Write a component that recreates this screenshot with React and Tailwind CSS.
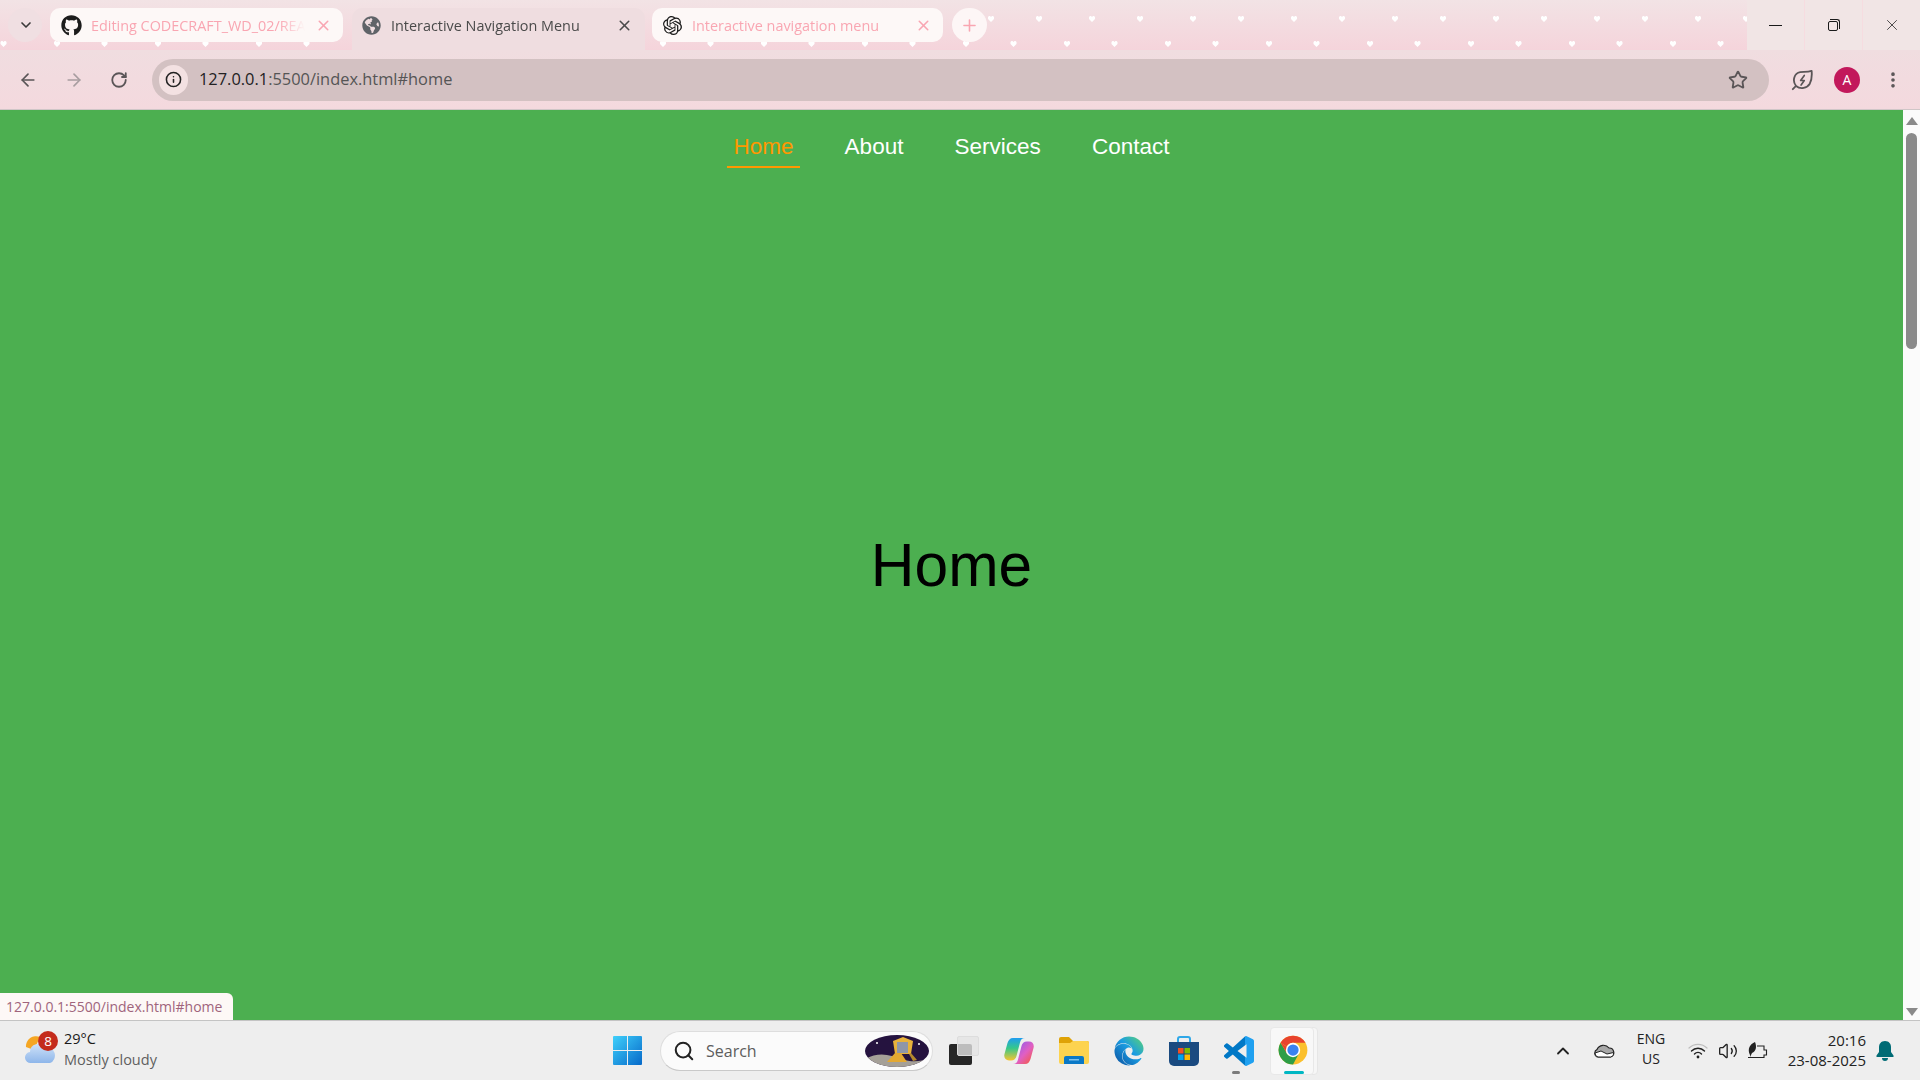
import { ArrowLeft, ArrowRight, ChevronDown, ChevronUp, EllipsisVertical, Info, Plus, RotateCw, Search, Star, Volume2, X } from 'lucide-react';
import { FaEdge, FaGithub, FaGlobeAmericas } from 'react-icons/fa';
import { SiOpenai } from 'react-icons/si';

const heartRow = (first, second, count) => {
  const out = [];
  for (let i = 0; i < count; i++) {
    out.push(first + i * 101);
    out.push(second + i * 101);
  }
  return out;
};

const upperHearts = heartRow(-19, 29, 18);
const lowerHearts = heartRow(3.5, 57, 18);

function Hearts() {
  const heart = 'M0 1 L1 0 L2 0 L3 1 L4 0 L5 0 L6 1 L6 3 L3 6 L0 3 Z';
  return (
    <svg className="absolute left-0 top-0 w-[1920px] h-[50px]" viewBox="0 0 1920 50">
      {upperHearts.map((x) => (
        <path key={'u' + x} d={heart} fill="#fff" transform={`translate(${x - 3} 16)`} />
      ))}
      {lowerHearts.map((x) => (
        <path key={'l' + x} d={heart} fill="#fff" transform={`translate(${x - 3} 41)`} />
      ))}
    </svg>
  );
}

function LeafBolt({ className }) {
  return (
    <svg className={className} viewBox="0 0 24 24" fill="none" stroke="currentColor" strokeWidth="2" strokeLinejoin="round" strokeLinecap="round">
      <path d="M2 22 L5.5 18.5 C1 13 3.5 4.5 10 3.5 C14 3 18 3.5 22.5 2 C23 7 22.5 12 20.5 16 C17.5 21 10.5 22.5 5.5 18.5" />
      <path d="M14.5 7 L10.5 12.5 H14.5 L11 17.5" strokeWidth="1.8" />
    </svg>
  );
}

function WindowsLogo() {
  return (
    <svg className="w-[29px] h-[29px]" viewBox="0 0 29 29">
      <defs>
        <linearGradient id="win" x1="0" y1="0" x2="1" y2="1">
          <stop offset="0" stopColor="#3fd0fb" />
          <stop offset="1" stopColor="#0669c9" />
        </linearGradient>
      </defs>
      <path d="M1 0 H14 V14 H0 V1 A1 1 0 0 1 1 0 Z M15 0 H28 A1 1 0 0 1 29 1 V14 H15 Z M0 15 H14 V29 H1 A1 1 0 0 1 0 28 Z M15 15 H29 V28 A1 1 0 0 1 28 29 H15 Z" fill="url(#win)" />
    </svg>
  );
}

function Lander() {
  return (
    <svg className="w-[64px] h-[32px]" viewBox="0 0 64 32">
      <defs>
        <clipPath id="pill">
          <ellipse cx="32" cy="16" rx="32" ry="16" />
        </clipPath>
      </defs>
      <g clipPath="url(#pill)">
        <rect width="64" height="32" fill="#25133f" />
        <path d="M0 24 C14 16 26 20 36 24 C48 28 56 26 64 24 V32 H0 Z" fill="#a5a098" />
        <path d="M28 6 L38 2 L48 6 L46 19 H30 Z" fill="#e8b23c" />
        <rect x="32" y="7" width="11" height="11" fill="#8f96a8" />
        <path d="M30 18 L22 27 H42 L36 18 Z" fill="#e3a832" />
        <path d="M46 18 L52 25 L48 26 L44 19 Z" fill="#b4882c" />
        <circle cx="12" cy="8" r="1" fill="#fff" />
        <circle cx="54" cy="9" r="1" fill="#fff" />
      </g>
    </svg>
  );
}

function TaskView() {
  return (
    <div className="relative w-[30px] h-[29px]">
      <div className="absolute left-0 bottom-0 w-[23px] h-[21px] rounded-[2px] bg-[#262626]" />
      <div className="absolute right-0 top-0 w-[22px] h-[20px] rounded-[2px] bg-[#e4e4e4]/80 border border-[#dddddd]" />
    </div>
  );
}

function Copilot() {
  const blob = 'M9 1 H21 C18 1 16.5 3 16 5.5 L12.5 19 C12 21.5 10 23.5 7 23.5 H5 C1.5 23.5 -0.5 20.5 0.5 17 L3.5 6 C4.5 3 6 1 9 1 Z';
  return (
    <svg className="w-[30px] h-[28px]" viewBox="0 0 30 28">
      <defs>
        <linearGradient id="copA" x1="0" y1="0" x2="0" y2="1">
          <stop offset="0" stopColor="#1f9cf0" />
          <stop offset="0.45" stopColor="#35c88a" />
          <stop offset="1" stopColor="#f7c530" />
        </linearGradient>
        <linearGradient id="copB" x1="1" y1="1" x2="0" y2="0">
          <stop offset="0" stopColor="#7a5cf5" />
          <stop offset="0.55" stopColor="#e05fc4" />
          <stop offset="1" stopColor="#f7592f" />
        </linearGradient>
      </defs>
      <path d={blob} fill="url(#copA)" />
      <path d={blob} fill="url(#copB)" transform="rotate(180 15 14)" />
    </svg>
  );
}

function Explorer() {
  return (
    <svg className="w-[30px] h-[27px]" viewBox="0 0 30 27">
      <path d="M0 2 A2 2 0 0 1 2 0 H10 L14 4 H28 A2 2 0 0 1 30 6 V12 H0 Z" fill="#dfa206" />
      <path d="M0 6 H11 L14 4 H28 A2 2 0 0 1 30 6 V25 A2 2 0 0 1 28 27 H2 A2 2 0 0 1 0 25 Z" fill="#fdd34f" />
      <path d="M5 27 V21 A2 2 0 0 1 7 19 H23 A2 2 0 0 1 25 21 V27 Z" fill="#0a78c6" />
      <rect x="10" y="22" width="10" height="1.5" fill="#7cc0ec" />
    </svg>
  );
}

function Store() {
  return (
    <svg className="w-[30px] h-[30px]" viewBox="0 0 30 30">
      <path d="M9 7 V3 A2 2 0 0 1 11 1 H19 A2 2 0 0 1 21 3 V7" fill="none" stroke="#2fa8e8" strokeWidth="2" />
      <path d="M0 6 H30 V25 A5 5 0 0 1 25 30 H5 A5 5 0 0 1 0 25 Z" fill="#1a4a80" />
      <rect x="9" y="12" width="5.5" height="5.5" fill="#f25022" />
      <rect x="15.5" y="12" width="5.5" height="5.5" fill="#7fba00" />
      <rect x="9" y="18.5" width="5.5" height="5.5" fill="#00a4ef" />
      <rect x="15.5" y="18.5" width="5.5" height="5.5" fill="#ffb900" />
    </svg>
  );
}

function VsCode() {
  return (
    <svg className="w-[30px] h-[30px]" viewBox="0 0 24 24">
      <defs>
        <linearGradient id="vsc" x1="0" y1="0" x2="1" y2="0">
          <stop offset="0.7" stopColor="#0078c6" />
          <stop offset="0.7" stopColor="#1fa0f0" />
        </linearGradient>
      </defs>
      <path
        d="M23.15 2.587L18.21.21a1.494 1.494 0 0 0-1.705.29l-9.46 8.63-4.12-3.128a.999.999 0 0 0-1.276.057L.327 7.261A1 1 0 0 0 .326 8.74L3.899 12 .326 15.26a1 1 0 0 0 .001 1.479L1.65 17.94a.999.999 0 0 0 1.276.057l4.12-3.128 9.46 8.63a1.492 1.492 0 0 0 1.704.29l4.942-2.377A1.5 1.5 0 0 0 24 20.06V3.939a1.5 1.5 0 0 0-.85-1.352zm-5.146 14.861L10.826 12l7.178-5.448v10.896z"
        fill="url(#vsc)"
      />
    </svg>
  );
}

function ChromeLogo() {
  return (
    <svg className="w-[30px] h-[30px]" viewBox="0 0 48 48">
      <circle cx="24" cy="24" r="23" fill="#fbc02d" />
      <path d="M4.08 12.5 A23 23 0 0 0 24 47 L33.53 29.5 L14.47 29.5 Z" fill="#2e9e47" />
      <path d="M24 1 A23 23 0 0 1 43.92 12.5 H24 A11.5 11.5 0 0 0 14.04 18.25 L4.08 12.5 A23 23 0 0 1 24 1 Z" fill="#e8432e" />
      <path d="M4.08 12.5 L14.47 29.5 L19 22 Z" fill="#e8432e" />
      <circle cx="24" cy="24" r="11.5" fill="#fff" />
      <circle cx="24" cy="24" r="9" fill="#3b82f0" />
    </svg>
  );
}

function Weather() {
  return (
    <svg className="w-[31px] h-[34px]" viewBox="0 0 31 34">
      <defs>
        <linearGradient id="cloud" x1="0" y1="0" x2="0" y2="1">
          <stop offset="0" stopColor="#cfe2f8" />
          <stop offset="1" stopColor="#8eb6ea" />
        </linearGradient>
      </defs>
      <path d="M15 5 A10 10 0 0 0 1 15 L9 18 Z" fill="#f5a623" />
      <path d="M6 31 A5.5 5.5 0 0 1 5 20 A8 8 0 0 1 20 16 A7 7.5 0 0 1 25 31 Z" fill="url(#cloud)" />
    </svg>
  );
}

function OneDrive() {
  return (
    <svg className="w-[22px] h-[15px]" viewBox="0 0 22 15">
      <path d="M5 14 A4 4 0 0 1 4 6.5 A7 7 0 0 1 16 5 A4.6 4.6 0 0 1 17.5 14 Z" fill="#a8a8a8" stroke="#222" strokeWidth="1.2" />
      <path d="M2 10 L8 8 L14 11 L20.5 9.5 A4 4 0 0 1 17.5 14 H5 A4 4 0 0 1 2 10 Z" fill="#fff" stroke="#222" strokeWidth="1" />
    </svg>
  );
}

function WifiArcs() {
  return (
    <svg className="w-[20px] h-[18px]" viewBox="0 0 20 18" fill="none" strokeLinecap="round">
      <path d="M1 6 A13 13 0 0 1 19 6" stroke="#bdbdbd" strokeWidth="1.2" />
      <path d="M3.5 9 A9 9 0 0 1 16.5 9" stroke="#222" strokeWidth="1.4" />
      <path d="M6.5 12 A5 5 0 0 1 13.5 12" stroke="#222" strokeWidth="1.4" />
      <circle cx="10" cy="15" r="1.4" fill="#222" />
    </svg>
  );
}

function BatteryLeaf() {
  return (
    <svg className="w-[22px] h-[20px]" viewBox="0 0 22 20">
      <path d="M1 16.5 H17 V14 H19.5 V9 H17 V5 H10" fill="none" stroke="#222" strokeWidth="1.1" />
      <path d="M3 14 C0 8 3 3 8 1 C10 6 9 10 5 12 L3 16" fill="#222" />
    </svg>
  );
}

function Bell() {
  return (
    <svg className="w-[18px] h-[20px]" viewBox="0 0 18 20">
      <path d="M9 0 C5 0 3 3 3 6 V11 L0.5 14.5 V16 H17.5 V14.5 L15 11 V6 C15 3 13 0 9 0 Z" fill="#006b75" />
      <path d="M6 17 H12 A3 3 0 0 1 6 17 Z" fill="#006b75" />
    </svg>
  );
}

function Tab({ icon, title, active, className }) {
  return (
    <div
      className={`flex items-center pl-[11px] pr-[11px] mt-[8px] ${
        active ? 'h-[34px] rounded-[10px] bg-[#fdf8f7] text-[#f9a6b2]' : 'h-[42px] pb-[8px] rounded-t-[10px] bg-[#efdde0] text-[#4a4a4a]'
      } ${className}`}
    >
      <span className="w-[21px] h-[21px] flex items-center justify-center shrink-0 text-[#1c1c1c]">{icon}</span>
      <span className="ml-[9px] flex-1 min-w-0 overflow-hidden whitespace-nowrap text-[14.4px] pt-[2px] [mask-image:linear-gradient(to_right,black_88%,transparent)]">{title}</span>
      <X className="w-[17px] h-[17px] ml-[10px] shrink-0" strokeWidth={2.2} />
    </div>
  );
}

export default function App() {
  return (
    <div className="w-[1920px] h-[1080px] flex flex-col overflow-hidden font-['Open_Sans','Noto_Sans',sans-serif]">
      {/* Tab strip */}
      <div className="relative h-[50px] flex bg-gradient-to-b from-[#f2e3e5] to-[#f5d4db]">
        <Hearts />
        <div className="relative flex flex-1 items-start pl-[8px]">
          <div className="mt-[8px] w-[34px] h-[34px] rounded-full bg-[#f0dfe2] flex items-center justify-center pl-[2px] text-[#3a3a3a]">
            <ChevronDown className="w-[16px] h-[16px]" strokeWidth={2.5} />
          </div>
          <Tab active className="ml-[8px] w-[293px]" icon={<FaGithub className="w-[21px] h-[21px]" />} title="Editing CODECRAFT_WD_02/README.md" />
          <Tab className="ml-[9px] w-[293px] !pl-[9px] !pr-[12px]" icon={<FaGlobeAmericas className="w-[19px] h-[19px] text-[#5f6368]" />} title="Interactive Navigation Menu" />
          <Tab active className="ml-[7px] w-[291px] !pl-[10px]" icon={<SiOpenai className="w-[19px] h-[19px]" />} title="Interactive navigation menu" />
          <div className="mt-[8px] ml-[9px] w-[35px] h-[34px] rounded-full bg-[#fdf6f6] flex items-center justify-center text-[#f9a6b2]">
            <Plus className="w-[19px] h-[19px]" strokeWidth={2} />
          </div>
        </div>
        <div className="relative flex w-[173px] bg-[#f1e5e5] text-[#1a1a1a]">
          <div className="w-[57px] flex items-center justify-center">
            <div className="w-[13px] h-px bg-[#1a1a1a]" />
          </div>
          <div className="w-[58px] flex items-center justify-center border-l border-[#f6dce0]">
            <div className="relative w-[12px] h-[12px]">
              <div className="absolute left-0 bottom-0 w-[10px] h-[10px] rounded-[2px] border border-[#1a1a1a]" />
              <div className="absolute right-0 top-0 w-[10px] h-[10px] rounded-tr-[3px] border-t border-r border-[#1a1a1a]" />
            </div>
          </div>
          <div className="flex-1 flex items-center justify-center border-l border-[#f6dce0]">
            <X className="w-[18px] h-[18px]" strokeWidth={1} />
          </div>
        </div>
      </div>

      {/* Toolbar */}
      <div className="h-[60px] flex items-center pl-[18px] bg-gradient-to-b from-[#f0dde0] to-[#f4d9de] border-b border-[#cfc6c7] text-[#5a5557]">
        <ArrowLeft className="w-[20px] h-[20px]" strokeWidth={2} />
        <ArrowRight className="w-[20px] h-[20px] ml-[26px] text-[#a89da0]" strokeWidth={2} />
        <RotateCw className="w-[18px] h-[18px] ml-[26px]" strokeWidth={2.4} />
        <div className="ml-[24px] w-[1617px] h-[42px] rounded-full bg-[#d3c1c2] flex items-center pl-[7px] pr-[21px]">
          <div className="w-[29px] h-[30px] rounded-full bg-[#f3e1e2] flex items-center justify-center text-[#222]">
            <Info className="w-[17px] h-[17px]" strokeWidth={2.2} />
          </div>
          <span className="ml-[11px] text-[16.4px] text-[#222]">
            127.0.0.1<span className="text-[#555]">:5500/index.html#home</span>
          </span>
          <Star className="ml-auto w-[20px] h-[20px]" strokeWidth={2.2} />
        </div>
        <LeafBolt className="ml-[22px] w-[22px] h-[22px]" />
        <div className="ml-[21px] w-[26px] h-[26px] rounded-full bg-[#c2185b] flex items-center justify-center text-[14px] text-white">A</div>
        <EllipsisVertical className="ml-[23px] w-[20px] h-[20px]" strokeWidth={2.4} />
      </div>

      {/* Page */}
      <div className="flex h-[910px]">
        <main className="relative flex-1 bg-[#4caf50] flex items-center justify-center font-['Liberation_Sans',Arial,sans-serif]">
          <nav className="absolute left-0 right-0 top-[20px] flex justify-center gap-[38.4px] text-[22.5px] leading-[33px] text-white">
            <a className="px-[6.4px] pb-[3px] border-b-2 border-[#ff9800] text-[#ff9800]">Home</a>
            <a className="px-[6.4px] pb-[3px] border-b-2 border-transparent">About</a>
            <a className="px-[6.4px] pb-[3px] border-b-2 border-transparent">Services</a>
            <a className="px-[6.4px] pb-[3px] border-b-2 border-transparent">Contact</a>
          </nav>
          <h1 className="text-[60.5px] text-black">Home</h1>
          <div className="absolute left-0 bottom-0 w-[233px] h-[27px] rounded-tr-[6px] bg-[#fdf8f6] pl-[6px] flex items-center text-[14px] text-[#a0647c] font-['Open_Sans',sans-serif]">
            127.0.0.1:5500/index.html#home
          </div>
        </main>
        <div className="w-[17px] bg-[#fbfbfb] flex flex-col items-center pt-[7px] pb-[4px]">
          <div className="w-0 h-0 border-x-[6px] border-x-transparent border-b-[8px] border-b-[#8a8a8a]" />
          <div className="mt-[8px] w-[11px] h-[216px] rounded-full bg-[#8a8a8a]" />
          <div className="mt-auto w-0 h-0 border-x-[6px] border-x-transparent border-t-[8px] border-t-[#8a8a8a]" />
        </div>
      </div>

      {/* Taskbar */}
      <div className="h-[60px] flex items-center bg-[#eeeeee] border-t border-[#c4c4c4]">
        <div className="w-[613px] pl-[25px] flex items-center">
          <div className="relative -mt-[3px]">
            <Weather />
            <div className="absolute left-[13px] -top-[1px] w-[20px] h-[20px] rounded-full bg-[#c42b1c] flex items-center justify-center text-[13.5px] text-white">8</div>
          </div>
          <div className="ml-[8px] -mt-[3px] text-[14.5px] leading-[21px]">
            <div className="text-[#1a1a1a]">29°C</div>
            <div className="text-[#5f5f5f]">Mostly cloudy</div>
          </div>
        </div>
        <WindowsLogo />
        <div className="ml-[18px] w-[273px] h-[40px] rounded-full bg-[#fbfbfb] border border-[#dedede] border-b-[#c9c9c9] flex items-center pl-[12px] pr-[3px]">
          <Search className="w-[22px] h-[22px] text-[#222]" strokeWidth={2.2} />
          <span className="ml-[11px] text-[16px] text-[#5d5d5d]">Search</span>
          <div className="ml-auto flex">
            <Lander />
          </div>
        </div>
        <div className="ml-[16px]"><TaskView /></div>
        <div className="ml-[25px]"><Copilot /></div>
        <div className="ml-[25px]"><Explorer /></div>
        <div className="ml-[25px] w-[30px] h-[30px]">
          <svg className="w-0 h-0 absolute">
            <defs>
              <linearGradient id="edge" x1="0" y1="1" x2="1" y2="0">
                <stop offset="0" stopColor="#0b4f9e" />
                <stop offset="0.55" stopColor="#1b9de2" />
                <stop offset="1" stopColor="#5ed66f" />
              </linearGradient>
            </defs>
          </svg>
          <FaEdge className="w-[30px] h-[30px] fill-[url(#edge)]" />
        </div>
        <div className="ml-[25px]"><Store /></div>
        <div className="ml-[25px] relative">
          <VsCode />
          <div className="absolute left-[8px] -bottom-[8px] w-[8px] h-[3px] rounded-full bg-[#7b7b7b]" />
        </div>
        <div className="ml-[16px] relative w-[48px] h-[48px]">
          <div className="absolute right-0 top-0 w-[10px] h-[48px] rounded-r-[4px] bg-[#f6f6f6] border border-[#e6e6e6]" />
          <div className="absolute left-0 top-0 w-[44px] h-[48px] rounded-[4px] bg-[#f8f8f8] border border-[#e8e8e8] flex items-center justify-center pl-[2px] pb-[2px]">
            <ChromeLogo />
          </div>
          <div className="absolute left-[14px] bottom-[1px] w-[20px] h-[3px] rounded-full bg-[#00b7c3]" />
        </div>
        <ChevronUp className="ml-[235px] w-[20px] h-[20px] text-[#222]" strokeWidth={2.2} />
        <div className="ml-[20px]"><OneDrive /></div>
        <div className="ml-[20px] -mt-[3px] w-[32px] text-center text-[14px] leading-[20px] text-[#222]">
          <div>ENG</div>
          <div>US</div>
        </div>
        <div className="ml-[21px]"><WifiArcs /></div>
        <Volume2 className="ml-[10px] w-[20px] h-[20px] text-[#222]" strokeWidth={1.6} />
        <div className="ml-[9px]"><BatteryLeaf /></div>
        <div className="ml-[7px] -mt-[2px] w-[90px] whitespace-nowrap flex flex-col items-end text-[15px] leading-[20px] text-[#222]">
          <div>20:16</div>
          <div>23-08-2025</div>
        </div>
        <div className="ml-[10px]"><Bell /></div>
      </div>
    </div>
  );
}
